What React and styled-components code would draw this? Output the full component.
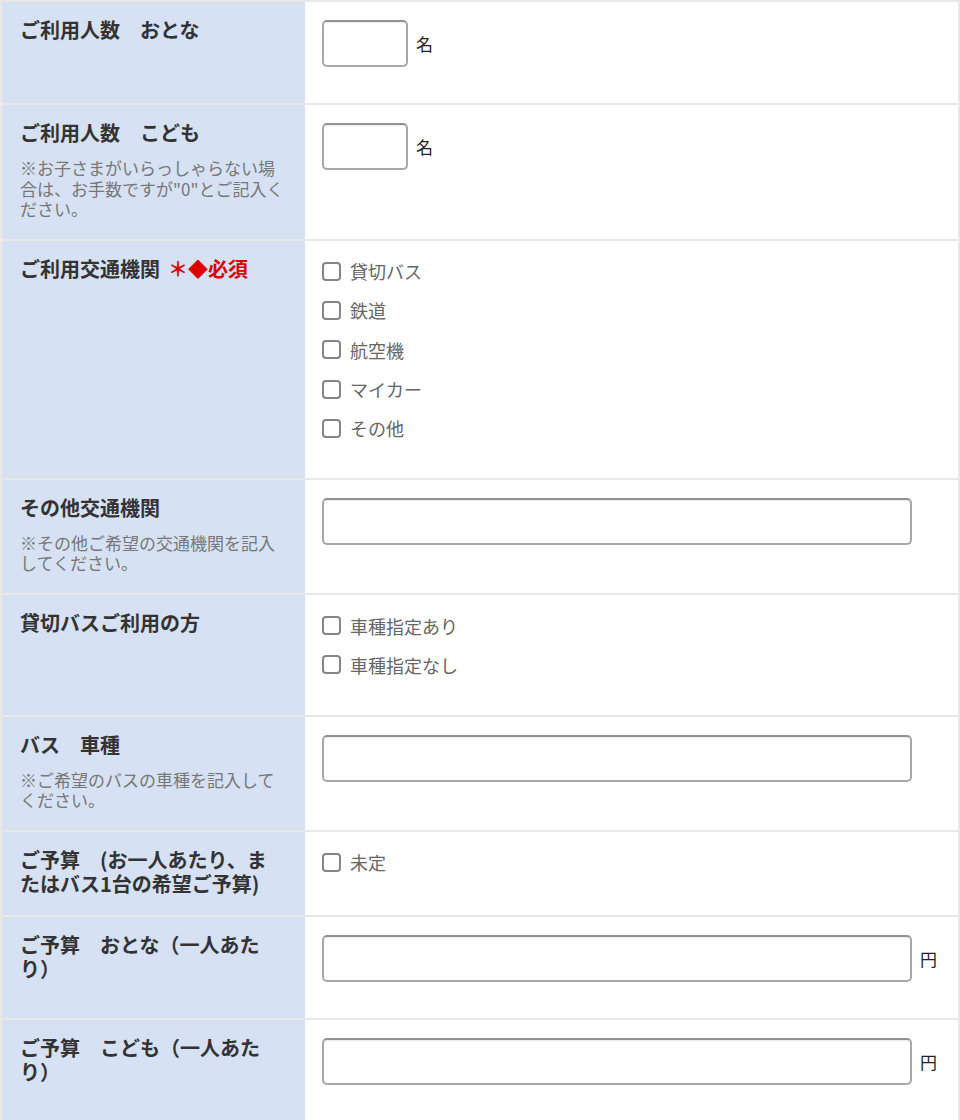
import React from 'react'
import styled, { createGlobalStyle } from 'styled-components'

const GlobalStyle = createGlobalStyle`
  html, body {
    margin: 0;
    padding: 0;
    background: #fff;
  }
  body {
    font-family: "Noto Sans CJK JP", "Noto Sans", sans-serif;
  }
  * { box-sizing: border-box; }
`

const FormTable = styled.div`
  width: 960px;
  border: 2px solid #e8e8e8;
  border-bottom: none;
`

const Row = styled.div`
  display: grid;
  grid-template-columns: 303px 1fr;
  border-top: ${p => (p.$first ? 'none' : '2px solid #e8e8e8')};
`

const Head = styled.div`
  background: #d6e1f4;
  padding: 16px 22px 19px 18px;
`

const Label = styled.div`
  font-size: 20px;
  line-height: 24px;
  font-weight: 700;
  color: #333;
  line-break: strict;
`

const Required = styled.span`
  color: #dd0000;
  margin-left: 8px;
`

const Note = styled.p`
  margin: 13px -4px 0 0;
  font-size: 17px;
  line-height: 20.5px;
  color: #777;
`

const Body = styled.div`
  background: #fff;
  padding: ${p => (p.$checks ? '11px 18px 30px 17px' : '18px 18px 36px 17px')};
`

const Field = styled.div`
  display: flex;
  align-items: center;
  gap: 8px;
`

const TextInput = styled.input`
  width: ${p => (p.$short ? '86px' : '590px')};
  height: 47px;
  margin: 0;
  border: 2px solid #a8a8a8;
  border-top-color: #929292;
  border-radius: 5px;
  background: #fff;
  box-shadow: inset 0 1px 1px rgba(0, 0, 0, 0.08);
  font-size: 17px;
  padding: 0 10px;
`

const Unit = styled.span`
  font-size: 17px;
  color: #222;
`

const CheckList = styled.div`
  display: flex;
  flex-direction: column;
`

const CheckItem = styled.label`
  display: flex;
  align-items: center;
  gap: 9px;
  height: 39.3px;
  font-size: 18px;
  color: #666;
`

const Box = styled.span`
  width: 19px;
  height: 19px;
  border: 2px solid #858585;
  border-radius: 4px;
  background: #fff;
  flex: none;
`

const Checks = ({ items }) => (
  <CheckList>
    {items.map(item => (
      <CheckItem key={item}>
        <Box />
        {item}
      </CheckItem>
    ))}
  </CheckList>
)

const App = () => (
  <>
    <GlobalStyle />
    <FormTable>
      <Row $first>
        <Head><Label>ご利用人数　おとな</Label></Head>
        <Body>
          <Field><TextInput $short /><Unit>名</Unit></Field>
        </Body>
      </Row>
      <Row>
        <Head>
          <Label>ご利用人数　こども</Label>
          <Note>※お子さまがいらっしゃらない場合は、お手数ですが"0"とご記入ください。</Note>
        </Head>
        <Body>
          <Field><TextInput $short /><Unit>名</Unit></Field>
        </Body>
      </Row>
      <Row>
        <Head><Label>ご利用交通機関<Required>＊◆必須</Required></Label></Head>
        <Body $checks>
          <Checks items={['貸切バス', '鉄道', '航空機', 'マイカー', 'その他']} />
        </Body>
      </Row>
      <Row>
        <Head>
          <Label>その他交通機関</Label>
          <Note>※その他ご希望の交通機関を記入してください。</Note>
        </Head>
        <Body>
          <Field><TextInput /></Field>
        </Body>
      </Row>
      <Row>
        <Head><Label>貸切バスご利用の方</Label></Head>
        <Body $checks>
          <Checks items={['車種指定あり', '車種指定なし']} />
        </Body>
      </Row>
      <Row>
        <Head>
          <Label>バス　車種</Label>
          <Note>※ご希望のバスの車種を記入してください。</Note>
        </Head>
        <Body>
          <Field><TextInput /></Field>
        </Body>
      </Row>
      <Row>
        <Head><Label>ご予算　(お一人あたり、またはバス1台の希望ご予算)</Label></Head>
        <Body $checks>
          <Checks items={['未定']} />
        </Body>
      </Row>
      <Row>
        <Head><Label>ご予算　おとな（一人あたり）</Label></Head>
        <Body>
          <Field><TextInput /><Unit>円</Unit></Field>
        </Body>
      </Row>
      <Row>
        <Head><Label>ご予算　こども（一人あたり）</Label></Head>
        <Body>
          <Field><TextInput /><Unit>円</Unit></Field>
        </Body>
      </Row>
    </FormTable>
  </>
)

export default App
